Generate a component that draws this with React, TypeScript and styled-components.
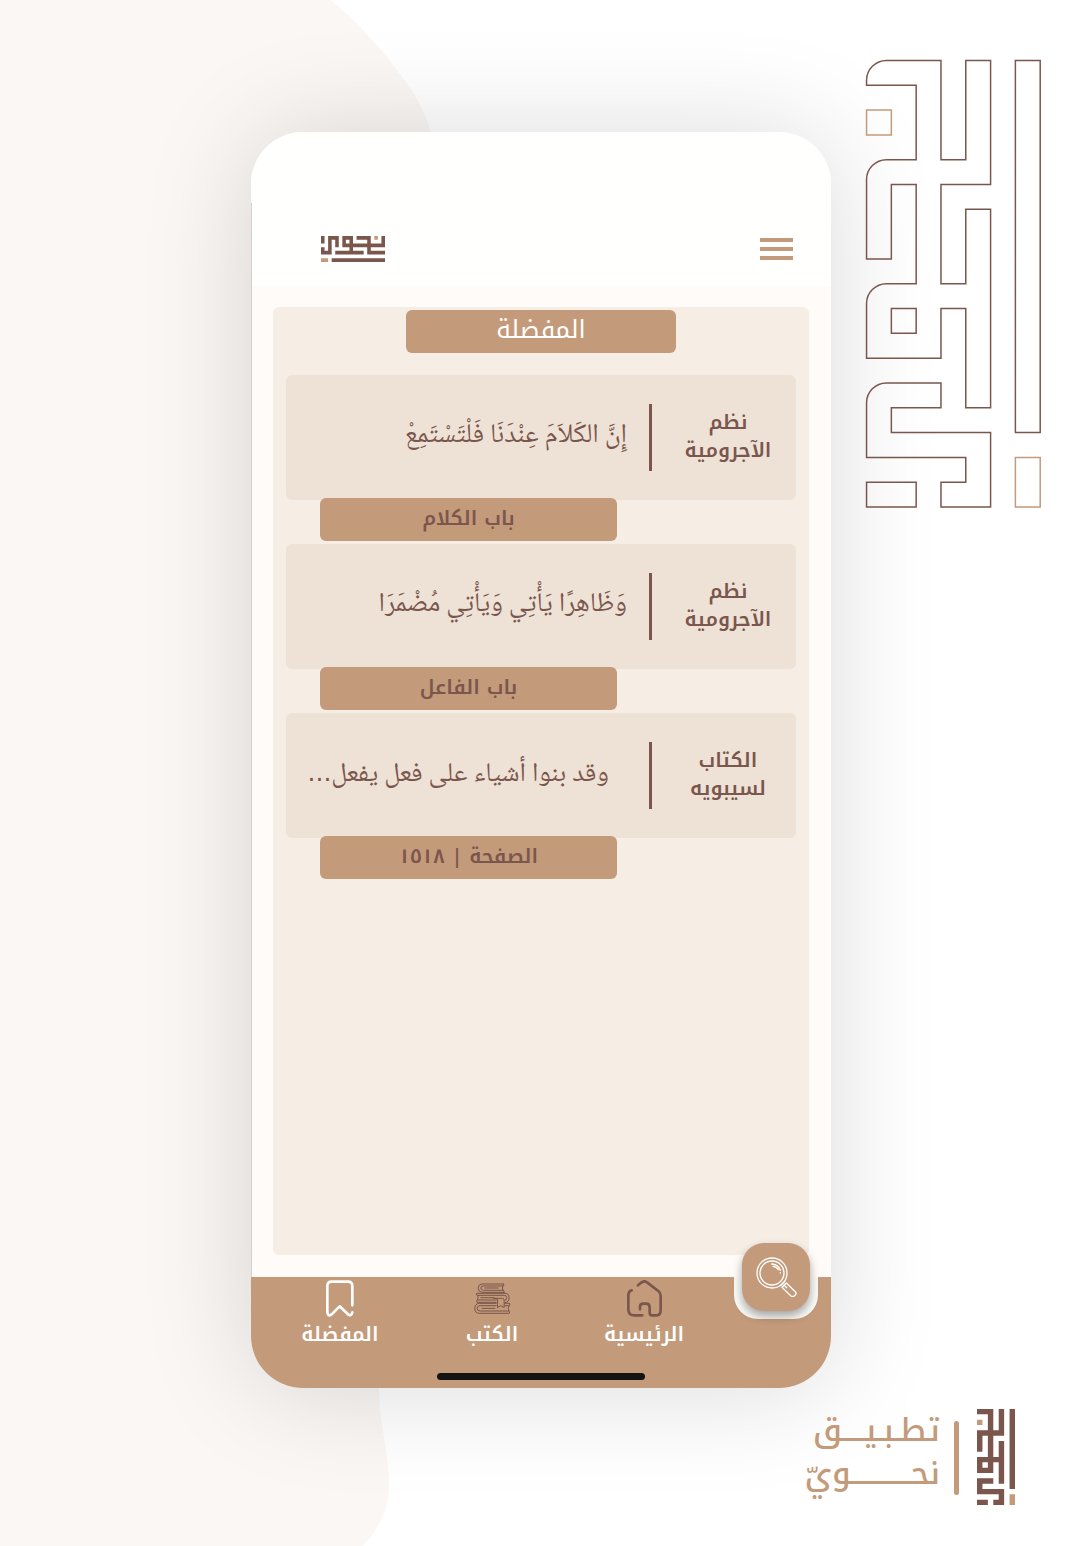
import React from "react";
import styled, { createGlobalStyle } from "styled-components";

const gold = "#c39a7a";
const brown = "#7a564d";
const hairline = "#d3d0ce";
const labelFont = `"Noto Kufi Arabic", "Noto Sans Arabic", "DejaVu Sans", sans-serif`;
const verseFont = `"Noto Naskh Arabic", "Noto Sans Arabic", "DejaVu Sans", sans-serif`;

const GlobalStyle = createGlobalStyle`
  *, *::before, *::after { box-sizing: border-box; }
  body { margin: 0; background: #fff; font-family: ${labelFont}; color: ${brown}; }
  h1, h2, p, ul { margin: 0; padding: 0; font-weight: inherit; }
  button { font: inherit; border: 0; padding: 0; background: none; cursor: pointer; }
`;

const Page = styled.div`
  position: relative;
  min-height: 100vh;
  overflow: hidden;
  background: #fff;
`;

const Blob = styled.svg`
  position: absolute;
  left: 0;
  top: 0;
  width: 440px;
  height: 100%;
`;

const Stage = styled.div`
  position: relative;
  display: grid;
  grid-template-columns: 1fr 580px 1fr;
  align-items: start;
  padding-left: 2px;
`;

const Phone = styled.main`
  grid-column: 2;
  grid-row: 1;
  margin-top: 132px;
  display: flex;
  flex-direction: column;
  border-radius: 52px;
  overflow: hidden;
  background: #fffbf8;
  box-shadow: 0 2px 110px rgba(0, 0, 0, 0.15);
`;

const Ornament = styled.div`
  grid-column: 3;
  grid-row: 1;
  display: flex;
  justify-content: flex-end;
  padding: 60px 38px 0 0;
`;

const Header = styled.header`
  display: flex;
  align-items: center;
  justify-content: space-between;
  height: 154px;
  padding: 80px 38px 0 70px;
  background: linear-gradient(${hairline}, ${hairline}) 0 71px / 1px 100% no-repeat, #fffffe;
`;

const MenuButton = styled.button`
  display: flex;
  flex-direction: column;
  gap: 5px;
  width: 33px;
`;

const MenuLine = styled.span`
  height: 4px;
  background: ${gold};
`;

const Screen = styled.div`
  padding: 21px 22px 22px 21px;
  border-left: 1px solid ${hairline};
`;

const Panel = styled.section`
  min-height: 948px;
  padding: 3px 13px;
  border-radius: 6px;
  background: #f6ede4;
`;

const PanelTitle = styled.h1`
  width: 270px;
  height: 43px;
  margin: 0 auto 22px;
  border-radius: 6px;
  background: ${gold};
  color: #fff;
  font-size: 25px;
  line-height: 40px;
  text-align: center;
`;

const List = styled.ul`
  display: flex;
  flex-direction: column;
  gap: 3px;
  list-style: none;
`;

const Card = styled.article`
  display: flex;
  align-items: center;
  height: 125px;
  padding: 0 8px;
  border-radius: 6px;
  background: #eee2d6;
`;

const Source = styled.h2`
  width: 120px;
  padding-bottom: 4px;
  font-size: 20px;
  font-weight: 600;
  line-height: 28px;
  text-align: center;
  white-space: pre-line;
`;

const Divider = styled.span`
  width: 3px;
  height: 67px;
  margin-right: 16px;
  background: ${brown};
`;

const Verse = styled.p<{ $inset?: boolean }>`
  padding: 0 ${(p) => (p.$inset ? 40 : 22)}px 4px 0;
  font-family: ${verseFont};
  font-size: 27px;
  line-height: 44px;
  white-space: nowrap;
`;

const Ellipsis = styled.span`
  font-family: "DejaVu Sans", sans-serif;
  font-size: 25px;
`;

const Tag = styled.p`
  position: relative;
  width: 297px;
  height: 43px;
  margin: -2px auto 0 34px;
  border-radius: 6px;
  background: ${gold};
  font-size: 20px;
  font-weight: 600;
  line-height: 40px;
  text-align: center;
`;

const Nav = styled.nav`
  position: relative;
  display: grid;
  grid-template-columns: repeat(3, 1fr);
  align-items: start;
  height: 111px;
  padding: 3px 111px 0 13px;
  background: ${gold};
`;

const NavLink = styled.a`
  display: flex;
  flex-direction: column;
  align-items: center;
  color: #fff;
  font-size: 20px;
  font-weight: 600;
  line-height: 34px;
  text-decoration: none;
`;

const NavIcon = styled.span`
  display: flex;
  align-items: center;
  height: 37px;
`;

const SearchDock = styled.div`
  position: absolute;
  top: -34px;
  right: 13px;
  width: 84px;
  height: 76px;
  padding: 0 8px;
  border-radius: 0 0 24px 24px;
  background: linear-gradient(transparent 34px, #fafaf7 34px);
`;

const SearchButton = styled.button`
  display: flex;
  align-items: center;
  justify-content: center;
  width: 68px;
  height: 68px;
  border-radius: 22px;
  background: ${gold};
  box-shadow: 0 5px 10px rgba(0, 0, 0, 0.35);
`;

const HomeIndicator = styled.span`
  position: absolute;
  left: 50%;
  bottom: 8px;
  width: 208px;
  height: 7px;
  margin-left: -104px;
  border-radius: 4px;
  background: #141414;
`;

const Footer = styled.footer`
  position: relative;
  display: flex;
  justify-content: flex-start;
  gap: 18px;
  padding: 21px 65px 41px;
`;

const FooterBar = styled.span`
  width: 5px;
  height: 74px;
  margin-top: 12px;
  border-radius: 3px;
  background: ${gold};
`;

const Tagline = styled.p`
  margin-right: -4px;
  color: ${gold};
  font-size: 32px;
  font-weight: 500;
  line-height: 43px;
  white-space: nowrap;
`;

const TaglineRow = styled.span`
  display: block;
`;

const squareLogo =
  "M0 0H3V4H4V0H5V5H3V9H4V6H5V14H4V10H3V12H0V9H2V5H1V8H0V4H2V1H0ZM1 10V11H2V10ZM0 13H3V14H1V15H5V18H3V17H4V16H0ZM0 17H2V18H0ZM6 0H7V15H6Z";
const roundedLogo =
  "M0 1V.8A.8 .8 0 0 1 .8 0H3V4H4V0H5V5H3V9H4V6H5V14H4V10H3V12H0V9.8A.8 .8 0 0 1 .8 9H2V5H1V8H0V4.8A.8 .8 0 0 1 .8 4H2V1ZM1 10V11H2V10ZM0 16V13.8A.8 .8 0 0 1 .8 13H3V14H1V15H5V18H3V17H4V16ZM0 17H2V18H0ZM6 0H7V15H6Z";
const logoDots = "M0 2H1V3H0ZM6 16H7V18H6Z";

const OutlineLogo = () => (
  <svg width="177" height="449" viewBox="-.06 -.02 7.13 18.1" fill="none" strokeWidth=".06" overflow="visible" aria-hidden="true">
    <path d={roundedLogo} stroke={brown} />
    <path d={logoDots} stroke={gold} />
  </svg>
);

const FooterLogo = () => (
  <svg width="38" height="96" viewBox="0 0 7 18" preserveAspectRatio="none" aria-hidden="true">
    <path d={squareLogo} fill={brown} fillRule="evenodd" />
    <path d={logoDots} fill={gold} />
  </svg>
);

const HeaderLogo = () => (
  <svg width="64" height="26" viewBox="0 0 18 7" preserveAspectRatio="none" role="img" aria-label="نحوي">
    <g transform="translate(18 0) rotate(90)">
      <path d={squareLogo} fill={brown} fillRule="evenodd" />
      <path d={logoDots} fill={gold} />
    </g>
  </svg>
);

const HomeIcon = () => (
  <svg width="35" height="37" viewBox="0 0 105 111" fill="none" stroke={brown} strokeWidth="8" strokeLinecap="round" strokeLinejoin="round">
    <path d="M14 31Q4 34 4 46V88Q4 106 20 106H46M33 16L44 7Q52 1 60 7L94 33Q101 38 101 47V91Q101 106 89 106H75Q68 106 68 98V83Q68 71 58 71H50Q39 71 39 80V88" />
  </svg>
);

const BookmarkIcon = () => (
  <svg width="28" height="37" viewBox="0 0 84 111" fill="none" stroke="#fff" strokeWidth="8" strokeLinecap="round" strokeLinejoin="round">
    <path d="M79 76V18Q79 5 66 5H17Q4 5 4 18V94Q4 112 17 103L41 79L66 103Q76 110 79 97" />
  </svg>
);

const BooksIcon = () => (
  <svg width="37" height="31" viewBox="0 0 110 93" fill="none" stroke={brown} strokeWidth="3" strokeLinecap="round" strokeLinejoin="round">
    <path d="M88 3H24Q12 3 12 15T24 28H90M88 3Q92 9 86 9H28Q20 9 20 15T28 22H87Q83 16 86 9M32 15H72M87 22Q92 24 90 28" />
    <path d="M8 31H92Q105 31 105 44T93 59M8 31Q4 37 10 37H90Q98 37 98 44T92 52M10 37Q14 44 10 51H66M10 51Q4 53 9 58H66M20 44H60" />
    <path d="M66 61H16Q2 61 2 76T16 91H105Q109 86 104 84H18Q9 84 9 76T18 68H66M92 61H106Q110 67 104 68H92M104 68Q100 76 104 84M24 76H62" />
    <path d="M58 46H84Q90 46 90 52V74L80 68L70 74V51Q70 46 64 46" />
  </svg>
);

const SearchIcon = () => (
  <svg width="41" height="40" viewBox="0 0 123 120" fill="none" stroke="#fff" strokeWidth="4" strokeLinecap="round" strokeLinejoin="round">
    <circle cx="48" cy="48" r="45" />
    <circle cx="48" cy="48" r="36" />
    <path d="M47 21Q67 22 73 40M51 28Q62 29 67 38M73 47V48" />
    <path d="M73 86L86 73M78 91L91 78L118 104Q123 110 116 116Q110 121 104 116ZM84 84L92 92" />
  </svg>
);

const favourites = [
  { source: "نظم\nالآجرومية", verse: "إِنَّ الكَلاَمَ عِنْدَنَا فَلْتَسْتَمِعْ", tag: "باب الكلام" },
  { source: "نظم\nالآجرومية", verse: "وَظَاهِرًا يَأْتِي وَيَأْتِي مُضْمَرَا", tag: "باب الفاعل" },
  { source: "الكتاب\nلسيبويه", verse: "وقد بنوا أشياء على فعل يفعل", tag: "الصفحة | ١٥١٨", cut: true },
];

const navItems = [
  { label: "الرئيسية", Icon: HomeIcon },
  { label: "الكتب", Icon: BooksIcon },
  { label: "المفضلة", Icon: BookmarkIcon },
];

export default function App() {
  return (
    <Page lang="ar">
      <GlobalStyle />
      <Blob viewBox="0 0 440 1546" preserveAspectRatio="none" aria-hidden="true">
        <path
          d="M0 0H331C355 20 378 45 397 70C415 93 427 114 431 134C440 320 360 420 350 700C344 1000 375 1260 379 1390C380 1430 389 1450 389 1484C389 1510 378 1530 363 1546H0Z"
          fill="#fbf7f4"
        />
      </Blob>
      <Stage>
        <Phone>
          <Header>
            <HeaderLogo />
            <MenuButton aria-label="القائمة">
              <MenuLine />
              <MenuLine />
              <MenuLine />
            </MenuButton>
          </Header>
          <Screen>
            <Panel dir="rtl">
              <PanelTitle>المفضلة</PanelTitle>
              <List>
                {favourites.map((item) => (
                  <li key={item.tag}>
                    <Card>
                      <Source>{item.source}</Source>
                      <Divider />
                      <Verse $inset={item.cut}>
                        {item.verse}
                        {item.cut && <Ellipsis>...</Ellipsis>}
                      </Verse>
                    </Card>
                    <Tag>{item.tag}</Tag>
                  </li>
                ))}
              </List>
            </Panel>
          </Screen>
          <Nav dir="rtl">
            {navItems.map(({ label, Icon }) => (
              <NavLink href="#" key={label}>
                <NavIcon>
                  <Icon />
                </NavIcon>
                {label}
              </NavLink>
            ))}
            <SearchDock>
              <SearchButton aria-label="بحث">
                <SearchIcon />
              </SearchButton>
            </SearchDock>
            <HomeIndicator />
          </Nav>
        </Phone>
        <Ornament>
          <OutlineLogo />
        </Ornament>
      </Stage>
      <Footer dir="rtl">
        <FooterLogo />
        <FooterBar />
        <Tagline>
          <TaglineRow>تطـبـيــــق</TaglineRow>
          <TaglineRow>نحـــــــــــويّ</TaglineRow>
        </Tagline>
      </Footer>
    </Page>
  );
}
